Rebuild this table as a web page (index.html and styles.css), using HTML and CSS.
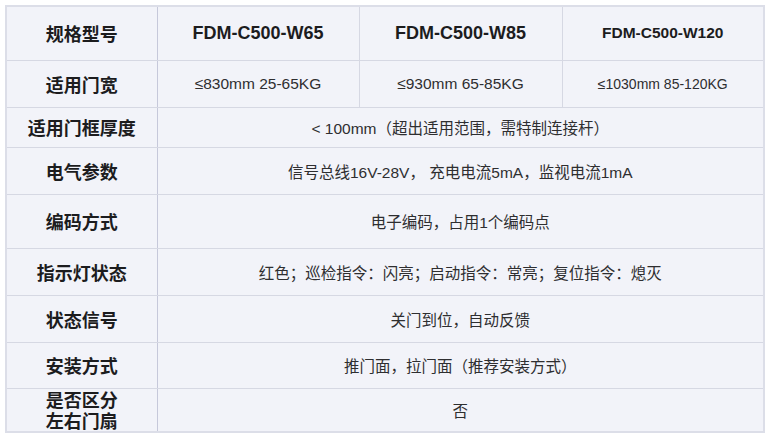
FILE: index.html
```html
<!DOCTYPE html>
<html lang="zh-CN">
<head>
<meta charset="utf-8">
<title>规格参数</title>
<link rel="stylesheet" href="styles.css">
</head>
<body>
<div class="wrap">
<table class="spec">
  <colgroup>
    <col class="c-label">
    <col class="c-a">
    <col class="c-b">
    <col class="c-c">
  </colgroup>
  <tr class="r1">
    <th>规格型号</th>
    <td class="model">FDM-C500-W65</td>
    <td class="model">FDM-C500-W85</td>
    <td class="model small">FDM-C500-W120</td>
  </tr>
  <tr class="r2">
    <th>适用门宽</th>
    <td>≤830mm 25-65KG</td>
    <td>≤930mm 65-85KG</td>
    <td class="small">≤1030mm 85-120KG</td>
  </tr>
  <tr class="r3">
    <th>适用门框厚度</th>
    <td colspan="3">&lt; 100mm（超出适用范围，需特制连接杆）</td>
  </tr>
  <tr class="r4">
    <th>电气参数</th>
    <td colspan="3">信号总线16V-28V， 充电电流5mA，监视电流1mA</td>
  </tr>
  <tr class="r5">
    <th>编码方式</th>
    <td colspan="3">电子编码，占用1个编码点</td>
  </tr>
  <tr class="r6">
    <th>指示灯状态</th>
    <td colspan="3">红色；巡检指令：闪亮；启动指令：常亮；复位指令：熄灭</td>
  </tr>
  <tr class="r7">
    <th>状态信号</th>
    <td colspan="3">关门到位，自动反馈</td>
  </tr>
  <tr class="r8">
    <th>安装方式</th>
    <td colspan="3">推门面，拉门面（推荐安装方式）</td>
  </tr>
  <tr class="r9">
    <th class="two"><span class="ln">是否区分</span><span class="ln">左右门扇</span></th>
    <td colspan="3">否</td>
  </tr>
</table>
</div>
</body>
</html>
```
FILE: styles.css
```css
html, body {
  margin: 0;
  padding: 0;
  background: #ffffff;
}

.wrap {
  padding: 5px 0 0 5px;
}

.spec {
  border-collapse: collapse;
  table-layout: fixed;
  width: 758px;
  font-family: "Liberation Sans", "Noto Sans CJK SC", sans-serif;
  background: #f2f3f9;
  border: 2px solid #dcdee8;
}

.c-label { width: 151px; }
.c-a { width: 202px; }
.c-b { width: 203px; }
.c-c { width: 202px; }

.spec th,
.spec td {
  border: 1px solid #d6d8e3;
  text-align: center;
  vertical-align: middle;
  padding: 0;
}

.spec th {
  font-family: "Noto Sans CJK SC", sans-serif;
  font-weight: 700;
  font-size: 18px;
  color: #1c1c1e;
  border-right: 1px solid #c6c8da;
}

.spec th.two {
  line-height: 21px;
}

.ln {
  display: block;
  height: 21px;
}

.spec td {
  font-size: 15.5px;
  color: #2e2e30;
}

.spec td.model {
  font-weight: 700;
  font-size: 18px;
  color: #1c1c1e;
}

.spec td.model.small {
  font-size: 15.5px;
}

.spec td.small {
  font-size: 14px;
}

.r1 { height: 54px; }
.r2 { height: 47px; }
.r3 { height: 40px; }
.r4 { height: 47px; }
.r5 { height: 54px; }
.r6 { height: 47px; }
.r7 { height: 47px; }
.r8 { height: 46px; }
.r9 { height: 42px; }
```
